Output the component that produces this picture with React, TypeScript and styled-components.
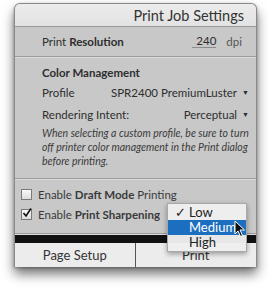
import React from 'react'
import styled, { createGlobalStyle } from 'styled-components'

const Global = createGlobalStyle`
  html, body { margin: 0; padding: 0; background: #fff; }
  body { width: 269px; height: 288px; overflow: hidden; font-family: Lato, "Open Sans", sans-serif; }
`

const Stage = styled.div`
  position: relative;
  width: 269px;
  height: 288px;
  padding-top: 3px;
  box-sizing: border-box;
`

const Panel = styled.div`
  margin-left: 14px;
  width: 241px;
  border-radius: 6px 6px 0 0;
  overflow: hidden;
  background: #c8c8c8;
  border: 1px solid #8a8a8a;
  border-bottom: none;
  box-shadow: 0 7px 12px rgba(0, 0, 0, 0.55), 0 1px 3px rgba(0, 0, 0, 0.3);
  color: #2e2e2e;
`

const Title = styled.div`
  height: 22px;
  background: linear-gradient(#ececec, #e2e2e2);
  border-bottom: 1px solid #9a9a9a;
  display: flex;
  align-items: center;
  justify-content: flex-end;
  padding-right: 12px;
  font-size: 14.5px;
  color: #333;
`

const Section = styled.div<{ pad: string }>`
  padding: ${p => p.pad};
  border-bottom: 1px solid #9c9c9c;
  box-shadow: 0 1px 0 #dcdcdc;
  margin-bottom: 1px;
  font-size: 11.5px;
`

const Row = styled.div<{ h: number }>`
  height: ${p => p.h}px;
  display: flex;
  align-items: center;
  justify-content: space-between;
`

const Value = styled.span`
  display: flex;
  align-items: center;
  gap: 4px;
`

const Caret = styled.span`
  font-size: 7px;
  margin-left: 1px;
`

const Field = styled.span`
  display: inline-block;
  width: 24px;
  text-align: right;
  border-bottom: 1px solid #8c8c8c;
  line-height: 12px;
  margin-right: 6px;
`

const Unit = styled.span`
  color: #555;
`

const Heading = styled.div`
  font-weight: 700;
  height: 16px;
  display: flex;
  align-items: center;
`

const Note = styled.div`
  margin-top: 2px;
  font-style: italic;
  font-size: 10.5px;
  line-height: 14px;
  color: #3a3a3a;
  white-space: nowrap;
`

const Check = styled.label`
  display: flex;
  align-items: center;
  gap: 6px;
  height: 20px;
  color: #3a3a3a;
`

const Box = styled.span`
  width: 9px;
  height: 9px;
  border: 1px solid #7a7a7a;
  background: linear-gradient(#fafafa, #dcdcdc);
  display: inline-flex;
  position: relative;
`

const Bar = styled.div`
  height: 8px;
  background: #111;
`

const Buttons = styled.div`
  display: flex;
  height: 24px;
  background: #ececec;
`

const Btn = styled.div<{ w: number }>`
  width: ${p => p.w}px;
  display: flex;
  align-items: center;
  justify-content: center;
  font-size: 13px;
  color: #333;
  & + & { border-left: 1px solid #555; }
`

const Menu = styled.div`
  position: absolute;
  left: 167px;
  top: 203px;
  width: 80px;
  padding: 1px 0;
  background: rgba(238, 238, 238, 0.97);
  border: 1px solid #a8a8a8;
  box-shadow: 0 2px 5px rgba(0, 0, 0, 0.35);
  font-size: 13px;
  box-sizing: border-box;
`

const Item = styled.div<{ active?: boolean }>`
  height: 15px;
  line-height: 15px;
  padding-left: 21px;
  position: relative;
  color: ${p => p.active ? '#fff' : '#222'};
  background: ${p => p.active ? '#1c6fc0' : 'transparent'};
`

const Tick = styled.span`
  position: absolute;
  left: 7px;
`

const Cursor = styled.svg`
  position: absolute;
  left: 234px;
  top: 220px;
`

export default function App() {
  return (
    <Stage>
      <Global />
      <Panel>
        <Title>Print Job Settings</Title>
        <Section pad="0 14px 0 27px">
          <Row h={29}>
            <span>Print <b>Resolution</b></span>
            <Value><Field>240</Field><Unit>dpi</Unit></Value>
          </Row>
        </Section>
        <Section pad="6px 7px 10px 27px">
          <Heading>Color Management</Heading>
          <Row h={24}>
            <span>Profile</span>
            <Value>SPR2400 PremiumLuster <Caret>▼</Caret></Value>
          </Row>
          <Row h={20}>
            <span>Rendering Intent:</span>
            <Value>Perceptual <Caret>▼</Caret></Value>
          </Row>
          <Note>
            When selecting a custom profile, be sure to turn<br />
            off printer color management in the Print dialog<br />
            before printing.
          </Note>
        </Section>
        <Section pad="4px 0 9px 6px">
          <Check><Box /><span>Enable <b>Draft Mode</b> Printing</span></Check>
          <Check>
            <Box>
              <svg width="10" height="10" viewBox="0 0 10 10" style={{ position: 'absolute', left: 0, top: -2 }}>
                <path d="M1.5 5 L4 8 L9 0.5" stroke="#111" strokeWidth="1.6" fill="none" />
              </svg>
            </Box>
            <span>Enable <b>Print Sharpening</b></span>
          </Check>
        </Section>
        <Bar />
        <Buttons>
          <Btn w={120}>Page Setup</Btn>
          <Btn w={121}>Print</Btn>
        </Buttons>
      </Panel>
      <Menu>
        <Item><Tick>✓</Tick>Low</Item>
        <Item active>Medium</Item>
        <Item>High</Item>
      </Menu>
      <Cursor width="12" height="18" viewBox="0 0 12 18">
        <path d="M1 1 L1 14 L4 11 L6.5 16.5 L8.5 15.5 L6 10 L10.5 10 Z" fill="#111" stroke="#fff" strokeWidth="1" />
      </Cursor>
    </Stage>
  )
}
